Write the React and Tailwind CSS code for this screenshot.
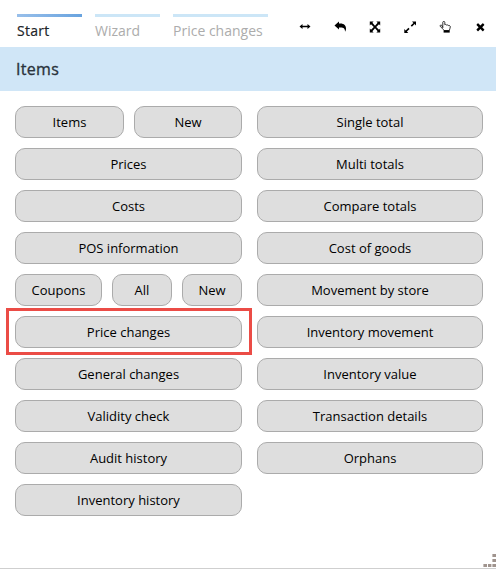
import React from 'react';

const tabs = [
  { label: 'Start', width: 'w-[65px]', active: true },
  { label: 'Wizard', width: 'w-[65px]' },
  { label: 'Price changes', width: 'w-[95px]' },
];

const leftRows = [
  [['Items', 'w-[109px]'], ['New', 'w-[108px]']],
  [['Prices', 'w-[227px]']],
  [['Costs', 'w-[227px]']],
  [['POS information', 'w-[227px]']],
  [['Coupons', 'w-[87px]'], ['All', 'w-[60px]'], ['New', 'w-[60px]']],
  [['Price changes', 'w-[227px]']],
  [['General changes', 'w-[227px]']],
  [['Validity check', 'w-[227px]']],
  [['Audit history', 'w-[227px]']],
  [['Inventory history', 'w-[227px]']],
];

const rightRows = [
  'Single total', 'Multi totals', 'Compare totals', 'Cost of goods',
  'Movement by store', 'Inventory movement', 'Inventory value',
  'Transaction details', 'Orphans',
];

const icons = {
  width: <path d="M.5 5.5 3.5 3v1.7h5V3l3 2.5-3 2.5V6.3h-5V8z" />,
  reply: <path d="M.5 4.4 5 .4v2.2h1.4c3.8 0 5.6 2.2 5.6 5 0 1.2-.3 2.4-1 3.2.2-3-1.1-4.4-4.6-4.4H5v2z" />,
  arrows: (
    <path d="M.8.6h3.8L3.4 1.8 6 4.7l2.6-2.9L7.4.6h3.8v3.8L10 3.2 7.2 6 10 8.8l1.2-1.2v3.8H7.4l1.2-1.2L6 7.3l-2.6 2.9 1.2 1.2H.8V7.6L2 8.8 4.8 6 2 3.2.8 4.4z" />
  ),
  expand: <path d="M8 .5h4v4l-1.4-1.4-2.7 2.7-1.2-1.2 2.7-2.7zM.3 8l1.4 1.4 2.7-2.7 1.2 1.2-2.7 2.7L4.3 12h-4z" />,
  hand: (
    <>
      <path
        d="M3.8 6.7V1.3c0-1.2 2-1.2 2 0v2.4c.6-.4 1.3-.2 1.7.3.6-.3 1.5 0 1.7.5.9-.3 2.1.1 2.1 1.3 0 1.5-.8 2.4-1 3.7H5C4.6 8 2.2 7 1.2 5.2c-.3-1 .8-1.7 1.5-.9z"
        fill="white" stroke="currentColor" strokeWidth=".8"
      />
      <path d="M4.6 9.4h6.1v2.2H4.6z" />
    </>
  ),
  close: (
    <path
      transform="translate(.5 -.1) scale(.0066)"
      d="M1490 1322q0 40-28 68l-136 136q-28 28-68 28t-68-28l-294-294-294 294q-28 28-68 28t-68-28l-136-136q-28-28-28-68t28-68l294-294-294-294q-28-28-28-68t28-68l136-136q28-28 68-28t68 28l294 294 294-294q28-28 68-28t68 28l136 136q28 28 28 68t-28 68l-294 294 294 294q28 28 28 68z"
    />
  ),
};

function Icon({ name }) {
  return (
    <svg className="h-3 w-3 text-black" viewBox="0 0 12 12" fill="currentColor" aria-hidden="true">
      {icons[name]}
    </svg>
  );
}

function MenuButton({ label, width }) {
  return (
    <button
      className={`h-8 ${width} rounded-[10px] border border-[#ababab] bg-[#dedede] text-center text-[13px] leading-[30px] whitespace-nowrap text-black`}
    >
      {label}
    </button>
  );
}

export default function App() {
  return (
    <div className="relative h-[569px] w-[496px] overflow-hidden border-b border-[#cfcfcf] bg-white font-['Open_Sans',sans-serif]">
      <header className="flex h-[47px] justify-between pt-[14px] pr-[10px] pl-[17px]">
        <nav className="flex gap-[13px]">
          {tabs.map((t) => (
            <div key={t.label} className={`${t.width} whitespace-nowrap`}>
              <div className={`h-[3px] ${t.active ? 'bg-linear-to-r from-[#98bfea] to-[#68a3df]' : 'bg-[#cce6f7]'}`} />
              <div className={`text-[14px] leading-[27px] ${t.active ? 'font-medium tracking-[0.3px] text-[#222529] [-webkit-text-stroke:0.2px_#222529]' : 'text-[#acacac]'}`}>{t.label}</div>
            </div>
          ))}
        </nav>
        <div className="flex gap-[23px] pt-[7px]">
          <Icon name="width" />
          <Icon name="reply" />
          <Icon name="arrows" />
          <Icon name="expand" />
          <Icon name="hand" />
          <Icon name="close" />
        </div>
      </header>
      <h1 className="h-11 bg-[#d0e6f7] pl-4 text-[16px] leading-[44px] font-medium tracking-[0.3px] text-[#2a333c] [-webkit-text-stroke:0.35px_#2a333c]">Items</h1>
      <main className="flex items-start gap-[15px] pt-[15px] pl-[15px]">
        <div className="flex flex-col gap-[10px]">
          {leftRows.map((row, i) => (
            <div key={i} className="relative flex gap-[10px]">
              {row.map(([label, width]) => (
                <MenuButton key={label} label={label} width={width} />
              ))}
              {i === 5 && (
                <div className="pointer-events-none absolute -top-2 -left-[9px] h-[47px] w-[246px] border-3 border-[#eb4c46]" />
              )}
            </div>
          ))}
        </div>
        <div className="flex flex-col gap-[10px]">
          {rightRows.map((label) => (
            <MenuButton key={label} label={label} width="w-[226px]" />
          ))}
        </div>
      </main>
      <svg className="absolute right-0 bottom-0 h-[15px] w-[13px]" viewBox="0 0 13 15" fill="#a0948e">
        <path d="M9.4 1H13v3H9.4zM9.4 6H13v3H9.4zM.4 11H4v3H.4zM5 11h3.4v3H5zM9.4 11H13v3H9.4z" />
      </svg>
    </div>
  );
}
